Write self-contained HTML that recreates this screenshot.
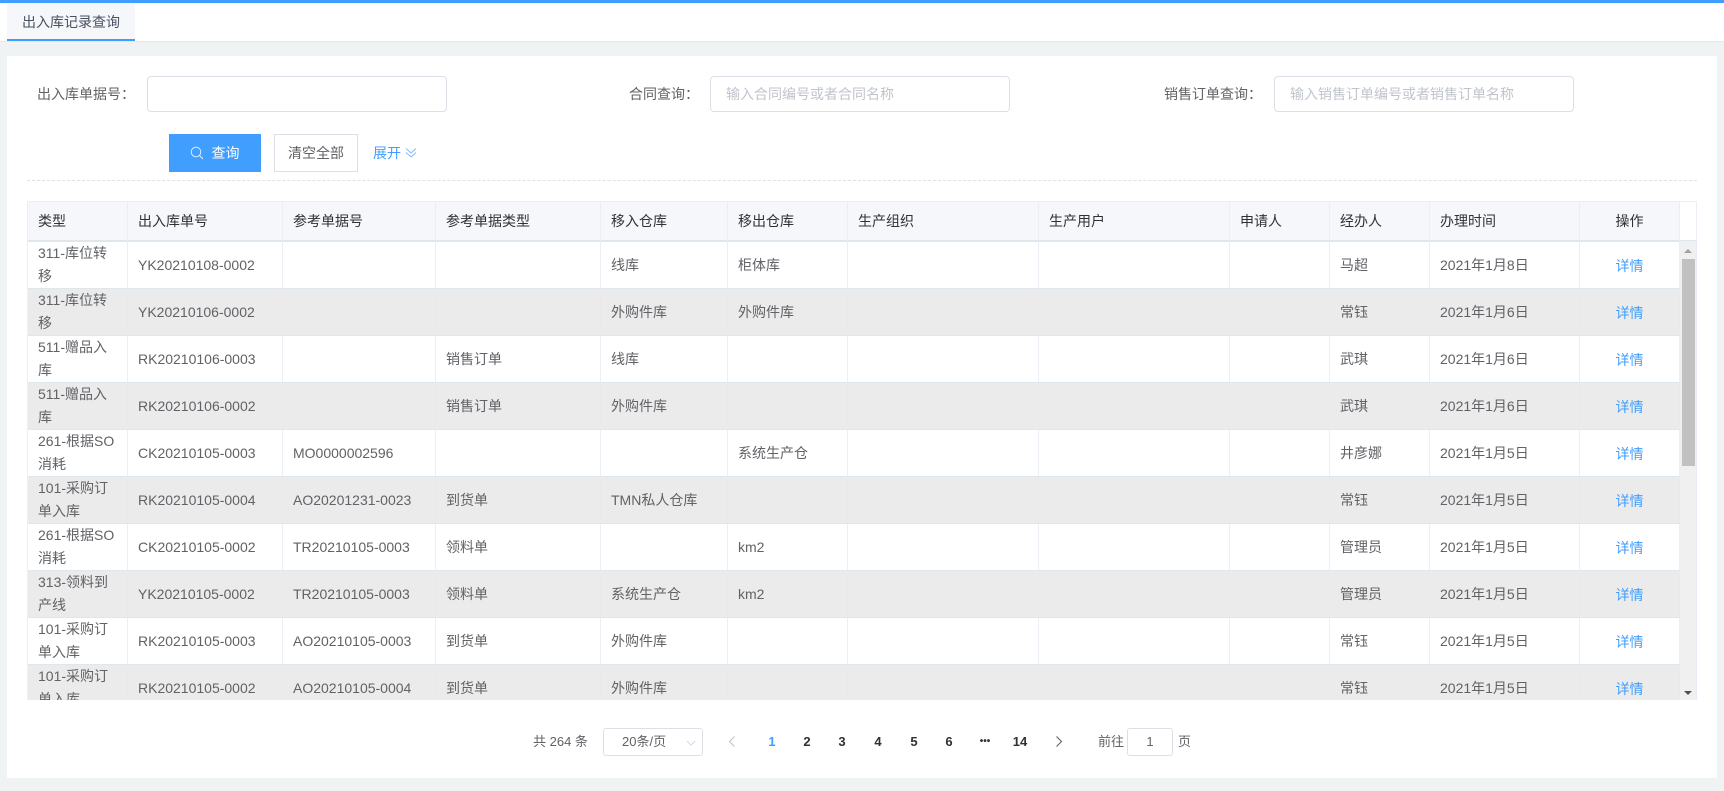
<!DOCTYPE html>
<html lang="zh"><head><meta charset="utf-8"><title>出入库记录查询</title>
<style>
*{box-sizing:border-box}
html,body{margin:0;padding:0;width:1724px;height:791px;overflow:hidden;background:#f0f3f4;font-family:"Liberation Sans","Noto Sans CJK SC",sans-serif;font-size:14px;color:#606266}
.a{position:absolute}
.topbar{left:0;top:0;width:1724px;height:3px;background:#409eff}
.head{left:0;top:3px;width:1724px;height:39px;background:#fff;border-bottom:1px solid #e6e9ec}
.tab{left:7px;top:3px;width:128px;height:38px;background:#f5f7fa;border-bottom:2px solid #409eff;text-align:center;line-height:38px;font-size:14px;color:#495060}
.panel{left:7px;top:56px;width:1710px;height:722px;background:#fff}
.lb{top:84px;line-height:20px;color:#606266;white-space:nowrap}
.ipt{top:76px;height:36px;width:300px;background:#fff;border:1px solid #dcdfe6;border-radius:4px;padding-left:15px;line-height:34px;color:#c0c4cc;white-space:nowrap}
.btn{top:134px;height:38px;line-height:36px;text-align:center}
.q{left:169px;width:92px;background:#409eff;color:#fff;line-height:38px}
.c{left:274px;width:84px;background:#fff;border:1px solid #dcdfe6;color:#606266}
.dash{left:27px;top:180px;width:1670px;border-top:1px dashed #dce3e4}
.wrap{left:27px;top:201px;width:1670px;height:499px;overflow:hidden;border-top:1px solid #ebeef5;border-left:1px solid #ebeef5;background:#fff}
table{border-collapse:separate;border-spacing:0;table-layout:fixed;width:1652px;position:absolute;left:0;top:0}
th,td{padding:0 10px;border-right:1px solid #ebeef5;text-align:left;font-weight:400;vertical-align:middle;overflow:hidden}
th{height:40px;background:#f5f7fa;color:#303133;border-bottom:2px solid #dfe6ec}
td{height:47px;line-height:23px;border-bottom:1px solid #dfe6ec;word-break:break-all}
tr.e td{background:#ebebeb;border-right-color:#e9e9ec}
td:last-child,th:last-child{text-align:center}
td:last-child{color:#409eff;padding-top:2px}
.sbh{left:1680px;top:202px;width:17px;height:39px;background:#fff;border-right:1px solid #ebeef5;border-bottom:1px solid #dfe6ec}
.sb{left:1680px;top:241px;width:17px;height:459px;background:#f0f0f0;border-right:1px solid #e8ebf3}
.thumb{left:1682px;top:259px;width:13px;height:207px;background:#c1c1c1}
.up{left:1684px;top:249px;width:0;height:0;border-left:4px solid transparent;border-right:4px solid transparent;border-bottom:4px solid #a3a3a3}
.dn{left:1684px;top:691px;width:0;height:0;border-left:4px solid transparent;border-right:4px solid transparent;border-top:4px solid #505050}
.pg{top:732px;line-height:20px;font-size:13px;white-space:nowrap}
.n{top:732px;width:36px;text-align:center;line-height:20px;font-size:13px;font-weight:700;color:#303133}
</style></head><body>
<div class="a topbar"></div><div class="a head"></div>
<div class="a tab">出入库记录查询</div>
<div class="a panel"></div>
<div class="a lb" style="left:37px">出入库单据号：</div>
<div class="a ipt" style="left:147px"></div>
<div class="a lb" style="left:629px">合同查询：</div>
<div class="a ipt" style="left:710px">输入合同编号或者合同名称</div>
<div class="a lb" style="left:1164px">销售订单查询：</div>
<div class="a ipt" style="left:1274px">输入销售订单编号或者销售订单名称</div>
<div class="a btn q"><svg width="14" height="14" viewBox="0 0 14 14" style="vertical-align:-2px;margin-right:7px;position:relative;left:-1px" fill="none" stroke="#fff" stroke-width="0.9" opacity=".9"><circle cx="6" cy="6" r="4.8"/><path d="M9.6 9.6L13 13"/></svg>查询</div>
<div class="a btn c">清空全部</div>
<div class="a lb" style="left:373px;top:143px;color:#409eff">展开</div>
<svg class="a" style="left:405px;top:147px" width="12" height="12" viewBox="0 0 12 12" fill="none" stroke="#409eff" stroke-width="0.9" opacity=".7"><path d="M1 1.5L6 6L11 1.5M1 5.5L6 10L11 5.5"/></svg>
<div class="a dash"></div>
<div class="a wrap">
<table>
<colgroup><col style="width:100px"><col style="width:155px"><col style="width:153px"><col style="width:165px"><col style="width:127px"><col style="width:120px"><col style="width:191px"><col style="width:191px"><col style="width:100px"><col style="width:100px"><col style="width:150px"><col style="width:100px"></colgroup>
<tr><th>类型</th><th>出入库单号</th><th>参考单据号</th><th>参考单据类型</th><th>移入仓库</th><th>移出仓库</th><th>生产组织</th><th>生产用户</th><th>申请人</th><th>经办人</th><th>办理时间</th><th>操作</th></tr>
<tr><td>311-库位转移</td><td>YK20210108-0002</td><td></td><td></td><td>线库</td><td>柜体库</td><td></td><td></td><td></td><td>马超</td><td>2021年1月8日</td><td>详情</td></tr>
<tr class="e"><td>311-库位转移</td><td>YK20210106-0002</td><td></td><td></td><td>外购件库</td><td>外购件库</td><td></td><td></td><td></td><td>常钰</td><td>2021年1月6日</td><td>详情</td></tr>
<tr><td>511-赠品入库</td><td>RK20210106-0003</td><td></td><td>销售订单</td><td>线库</td><td></td><td></td><td></td><td></td><td>武琪</td><td>2021年1月6日</td><td>详情</td></tr>
<tr class="e"><td>511-赠品入库</td><td>RK20210106-0002</td><td></td><td>销售订单</td><td>外购件库</td><td></td><td></td><td></td><td></td><td>武琪</td><td>2021年1月6日</td><td>详情</td></tr>
<tr><td>261-根据SO消耗</td><td>CK20210105-0003</td><td>MO0000002596</td><td></td><td></td><td>系统生产仓</td><td></td><td></td><td></td><td>井彦娜</td><td>2021年1月5日</td><td>详情</td></tr>
<tr class="e"><td>101-采购订单入库</td><td>RK20210105-0004</td><td>AO20201231-0023</td><td>到货单</td><td>TMN私人仓库</td><td></td><td></td><td></td><td></td><td>常钰</td><td>2021年1月5日</td><td>详情</td></tr>
<tr><td>261-根据SO消耗</td><td>CK20210105-0002</td><td>TR20210105-0003</td><td>领料单</td><td></td><td>km2</td><td></td><td></td><td></td><td>管理员</td><td>2021年1月5日</td><td>详情</td></tr>
<tr class="e"><td>313-领料到产线</td><td>YK20210105-0002</td><td>TR20210105-0003</td><td>领料单</td><td>系统生产仓</td><td>km2</td><td></td><td></td><td></td><td>管理员</td><td>2021年1月5日</td><td>详情</td></tr>
<tr><td>101-采购订单入库</td><td>RK20210105-0003</td><td>AO20210105-0003</td><td>到货单</td><td>外购件库</td><td></td><td></td><td></td><td></td><td>常钰</td><td>2021年1月5日</td><td>详情</td></tr>
<tr class="e"><td>101-采购订单入库</td><td>RK20210105-0002</td><td>AO20210105-0004</td><td>到货单</td><td>外购件库</td><td></td><td></td><td></td><td></td><td>常钰</td><td>2021年1月5日</td><td>详情</td></tr>
</table>
</div>
<div class="a sbh"></div><div class="a sb"></div><div class="a thumb"></div><div class="a up"></div><div class="a dn"></div>
<div class="a pg" style="left:533px">共 264 条</div>
<div class="a" style="left:603px;top:728px;width:100px;height:28px;border:1px solid #dcdfe6;border-radius:3px;background:#fff;line-height:26px;font-size:13px;padding-left:18px">20条/页</div>
<svg class="a" style="left:686px;top:740px" width="10" height="6" viewBox="0 0 10 6" fill="none" stroke="#d5d8de"><path d="M1 1L5 5L9 1"/></svg>
<svg class="a" style="left:728px;top:735px" width="8" height="13" viewBox="0 0 8 13" fill="none" stroke="#c0c4cc" stroke-width="1.1"><path d="M6.5 1.5L1.5 6.5L6.5 11.5"/></svg>
<div class="a n" style="left:754px;color:#409eff">1</div>
<div class="a n" style="left:789px">2</div>
<div class="a n" style="left:824px">3</div>
<div class="a n" style="left:860px">4</div>
<div class="a n" style="left:896px">5</div>
<div class="a n" style="left:931px">6</div>
<div class="a n" style="left:967px;font-size:10px">•••</div>
<div class="a n" style="left:1002px">14</div>
<svg class="a" style="left:1055px;top:735px" width="8" height="13" viewBox="0 0 8 13" fill="none" stroke="#606266" stroke-width="1.1"><path d="M1.5 1.5L6.5 6.5L1.5 11.5"/></svg>
<div class="a pg" style="left:1098px">前往</div>
<div class="a" style="left:1127px;top:728px;width:46px;height:28px;border:1px solid #dcdfe6;border-radius:3px;background:#fff;text-align:center;line-height:26px;font-size:13px">1</div>
<div class="a pg" style="left:1178px">页</div>
</body></html>
